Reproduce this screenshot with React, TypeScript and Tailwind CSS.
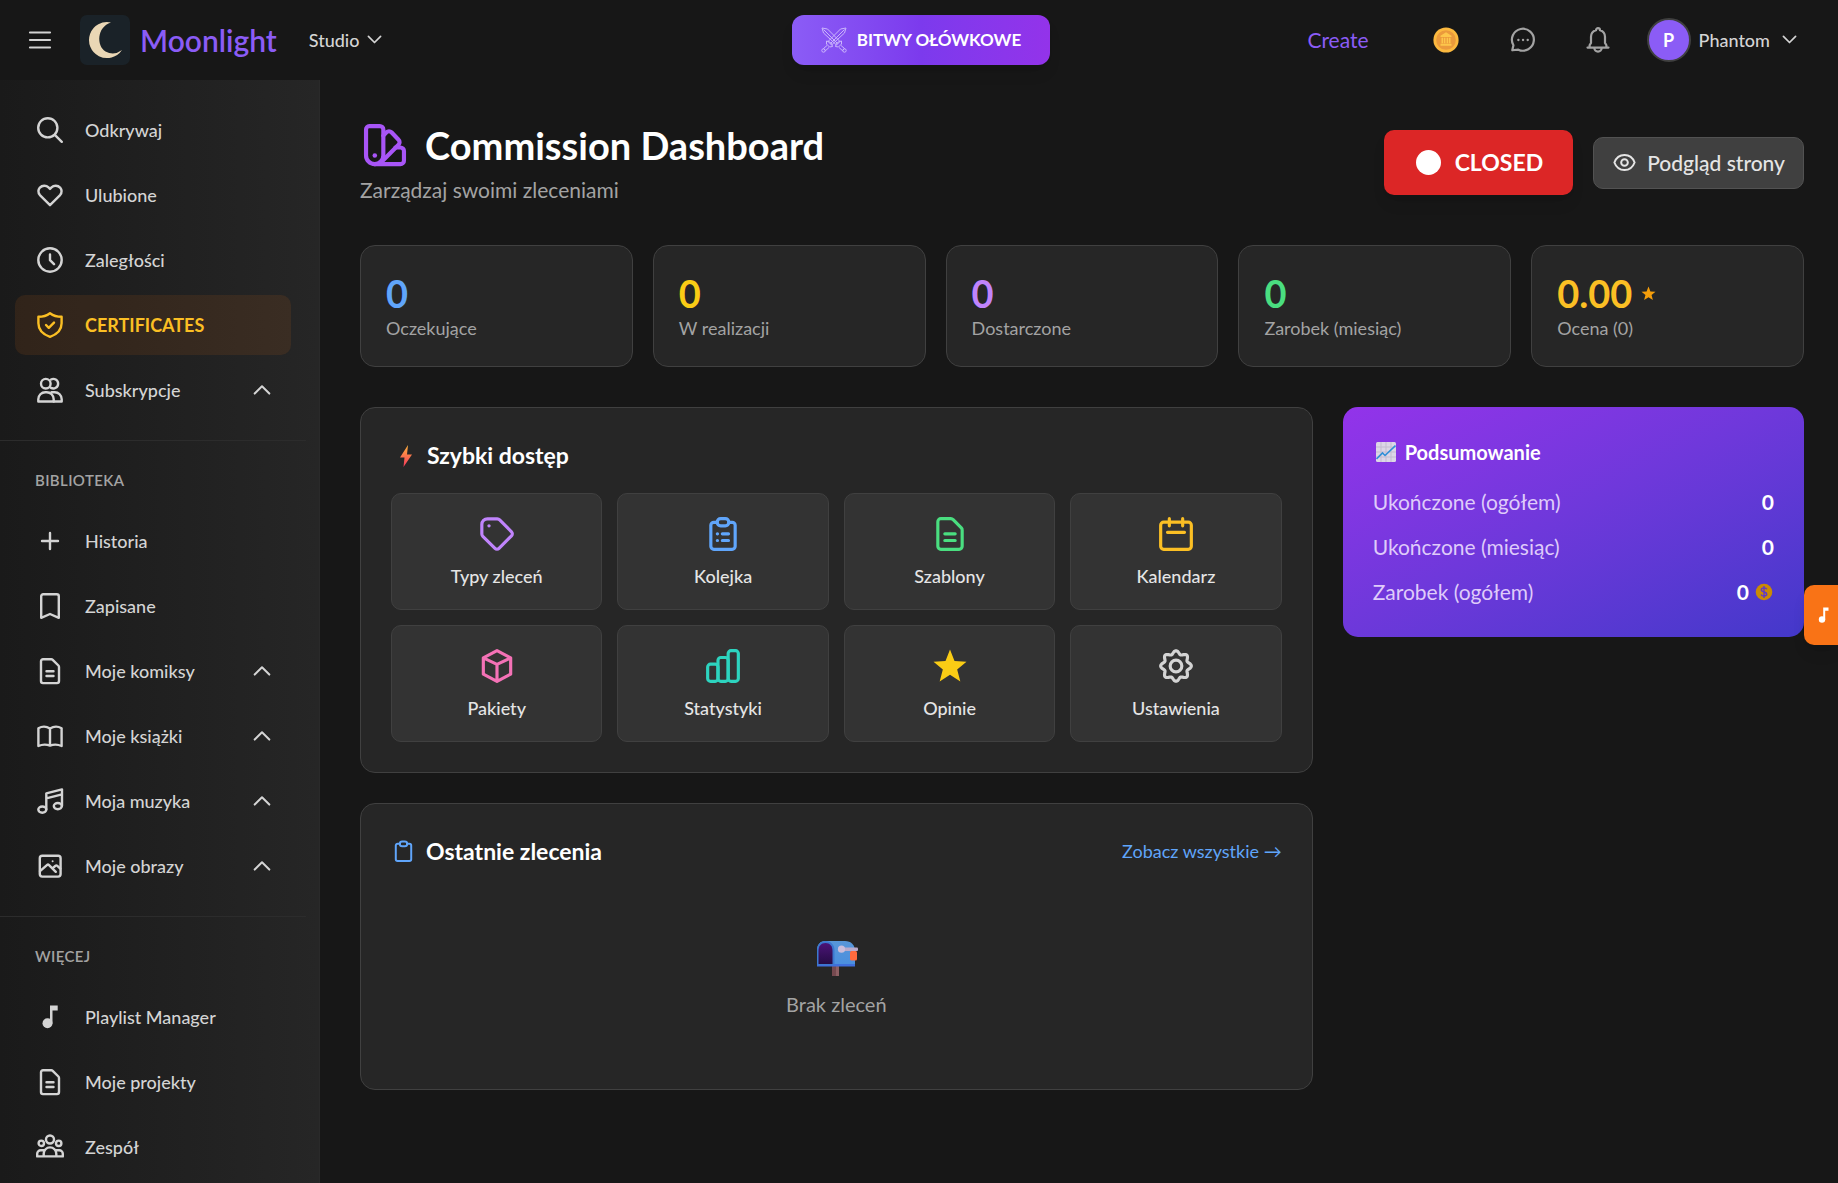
import React from 'react';

type IconProps = { className?: string };

/* Sidebar icons share a 30px grid */
const NavIcon: React.FC<{ children: React.ReactNode }> = ({ children }) => (
  <svg viewBox="0 0 30 30" className="size-[30px] shrink-0" fill="none" stroke="currentColor" strokeWidth="2.4" strokeLinecap="round" strokeLinejoin="round" aria-hidden="true">
    {children}
  </svg>
);

/* Everything else is drawn on a 24px grid */
const Icon: React.FC<IconProps & { children: React.ReactNode; stroke?: number }> = ({ className, children, stroke = 1.9 }) => (
  <svg viewBox="0 0 24 24" className={className} fill="none" stroke="currentColor" strokeWidth={stroke} strokeLinecap="round" strokeLinejoin="round" aria-hidden="true">
    {children}
  </svg>
);

const navIcons = {
  search: <><circle cx="12.8" cy="12.8" r="9.6" /><path d="m19.8 19.8 7 7" /></>,
  heart: <path d="M15 25.2 4.9 15.1a6 6 0 0 1 0-7.5 6 6 0 0 1 8.6-.2L15 8.9l1.5-1.5a6 6 0 0 1 8.6.2 6 6 0 0 1 0 7.5z" />,
  clock: <><circle cx="15" cy="15" r="11.7" /><path d="M15 9.5v5.7l4 4" /></>,
  shield: <><path d="M15 3.2c3.2 2.4 7 3.6 11.6 3.6v6.4c0 6.6-4.2 11-11.6 13.6C7.6 24.2 3.4 19.8 3.4 13.2V6.8C8 6.8 11.8 5.6 15 3.2z" /><path d="m11 15 2.8 2.8L19 12.6" /></>,
  users: <><circle cx="10.8" cy="8.7" r="4.8" /><path d="M16 4.5a4.8 4.8 0 1 1 0 8.4" /><path d="M3.3 26.5v-2.3a7 7 0 0 1 7-7h1.4a7 7 0 0 1 7 7v2.3z" /><path d="M16.5 17.2h3.2a7 7 0 0 1 7 7v2.3h-8" /></>,
  plus: <path d="M15 7v16M7 15h16" />,
  bookmark: <path d="M6.2 26.8V5.2a2 2 0 0 1 2-2h13.6a2 2 0 0 1 2 2v21.6L15 23z" />,
  doc: (
    <>
      <path d="M8 3.2h8.3a2 2 0 0 1 1.4.6l5.7 5.7a2 2 0 0 1 .6 1.4v14.2a2 2 0 0 1-2 2H8a2 2 0 0 1-2-2V5.2a2 2 0 0 1 2-2z" />
      <path d="M11.5 15.2h7M11.5 20h7" />
    </>
  ),
  book: <path d="M15 7.5v17M3.4 25V7.2C7 5.2 11.5 5.3 15 7.5c3.5-2.2 8-2.3 11.6-.3V25c-3.6-1.7-8-1.7-11.6-.5-3.6-1.2-8-1.2-11.6.5z" />,
  music: <><path d="M11.3 23.2V7.3L27 3.4v16.4M11.3 12.3 27 8.3" /><ellipse cx="7.3" cy="23.6" rx="4" ry="3.1" /><ellipse cx="22.8" cy="20.1" rx="4" ry="3.1" /></>,
  image: <><rect x="4.8" y="4.8" width="20.8" height="20.8" rx="2.5" /><path d="m5 20.2 7.2-6.4a1.2 1.2 0 0 1 1.6 0l7 7M17.5 17.5l2.8-2.6a1.5 1.5 0 0 1 2 0l3 2.8" /><circle cx="17.6" cy="10.3" r="1" fill="currentColor" stroke="none" /></>,
  note: <><circle cx="12.5" cy="21.2" r="5" fill="currentColor" stroke="none" /><path d="M15 3.5h7.7v5h-5.2v13H15z" fill="currentColor" stroke="none" /></>,
  team: <><circle cx="15" cy="7.5" r="4" /><circle cx="6.3" cy="11.3" r="2.7" /><circle cx="23.7" cy="11.3" r="2.7" /><path d="M8.7 24.4v-2.7a6.3 6.3 0 0 1 12.6 0v2.7zM8.7 24.4H2.2v-2.6a3.6 3.6 0 0 1 3.6-3.6h3.5M21.3 24.4h6.5v-2.6a3.6 3.6 0 0 0-3.6-3.6h-3.5" /></>,
};

interface NavItem {
  label: string;
  icon: keyof typeof navIcons;
  expandable?: boolean;
  active?: boolean;
}

const sections: { title?: string; items: NavItem[] }[] = [
  {
    items: [
      { label: 'Odkrywaj', icon: 'search' },
      { label: 'Ulubione', icon: 'heart' },
      { label: 'Zaległości', icon: 'clock' },
      { label: 'CERTIFICATES', icon: 'shield', active: true },
      { label: 'Subskrypcje', icon: 'users', expandable: true },
    ],
  },
  {
    title: 'BIBLIOTEKA',
    items: [
      { label: 'Historia', icon: 'plus' },
      { label: 'Zapisane', icon: 'bookmark' },
      { label: 'Moje komiksy', icon: 'doc', expandable: true },
      { label: 'Moje książki', icon: 'book', expandable: true },
      { label: 'Moja muzyka', icon: 'music', expandable: true },
      { label: 'Moje obrazy', icon: 'image', expandable: true },
    ],
  },
  {
    title: 'WIĘCEJ',
    items: [
      { label: 'Playlist Manager', icon: 'note' },
      { label: 'Moje projekty', icon: 'doc' },
      { label: 'Zespół', icon: 'team' },
    ],
  },
];

const stats = [
  { value: '0', label: 'Oczekujące', color: 'text-[#60a5fa]' },
  { value: '0', label: 'W realizacji', color: 'text-[#facc15]' },
  { value: '0', label: 'Dostarczone', color: 'text-[#c084fc]' },
  { value: '0', label: 'Zarobek (miesiąc)', color: 'text-[#4ade80]' },
  { value: '0.00', label: 'Ocena (0)', color: 'text-[#fbbf24]', star: true },
];

const starPath = 'M12 2.1l2.7 6.9 7.2.4-5.6 4.7 1.9 7.2L12 17.3l-6.2 4 1.9-7.2L2.1 9.4l7.2-.4z';

// Eight-lobed gear outline
const gearPath =
  Array.from({ length: 96 }, (_, i) => {
    const a = (i / 96) * Math.PI * 2;
    const r = 8.2 + Math.cos(8 * a);
    return `${i ? 'L' : 'M'}${(12 + r * Math.sin(a)).toFixed(2)} ${(12 - r * Math.cos(a)).toFixed(2)}`;
  }).join('') + 'z';

const quickLinks = [
  {
    label: 'Typy zleceń',
    color: 'text-[#c084fc]',
    icon: <><path d="M2.9 6.3a3.4 3.4 0 0 1 3.4-3.4h5.9a2 2 0 0 1 1.4.6l7.1 7.2a1.7 1.7 0 0 1 0 2.4l-7.5 7.5a1.7 1.7 0 0 1-2.4 0l-7.3-7.2a2 2 0 0 1-.6-1.4z" /><circle cx="7.2" cy="7.1" r="1" fill="currentColor" stroke="none" /></>,
  },
  {
    label: 'Kolejka',
    color: 'text-[#60a5fa]',
    icon: <><path d="M8.5 5H6.5a1.8 1.8 0 0 0-1.8 1.8v12.6a1.8 1.8 0 0 0 1.8 1.8h11a1.8 1.8 0 0 0 1.8-1.8V6.8A1.8 1.8 0 0 0 17.5 5h-2" /><rect x="8.5" y="2.8" width="7" height="4.3" rx="2.1" /><path d="M8.6 11.9h.1M11.6 11.9h3.7M8.6 15.9h.1M11.6 15.9h3.7" /></>,
  },
  {
    label: 'Szablony',
    color: 'text-[#4ade80]',
    icon: <><path d="M6.5 2.8h6a2 2 0 0 1 1.4.6l4.9 4.9a2 2 0 0 1 .5 1.4v9.7a1.8 1.8 0 0 1-1.8 1.8h-11a1.8 1.8 0 0 1-1.8-1.8V4.6a1.8 1.8 0 0 1 1.8-1.8z" /><path d="M8.9 11.9h6.2M8.9 15.9h6.2" /></>,
  },
  {
    label: 'Kalendarz',
    color: 'text-[#fbbf24]',
    icon: <><rect x="2.8" y="4.9" width="18.4" height="16.3" rx="1.8" /><path d="M8 2.8v4.3M16 2.8v4.3M6.9 11h10.2" /></>,
  },
  {
    label: 'Pakiety',
    color: 'text-[#f472b6]',
    icon: <path d="M12 2.8l8.2 4.3v9.8L12 21.2l-8.2-4.3V7.1zM3.8 7.1 12 11l8.2-3.9M12 11v10.2" />,
  },
  {
    label: 'Statystyki',
    color: 'text-[#2dd4bf]',
    icon: <><rect x="2.8" y="10.9" width="6.2" height="10.3" rx="1.7" /><rect x="9" y="6.9" width="6.1" height="14.3" rx="1.7" /><rect x="15.1" y="2.8" width="6.1" height="18.4" rx="1.7" /></>,
  },
  {
    label: 'Opinie',
    color: 'text-[#facc15]',
    icon: <path d={starPath} fill="currentColor" stroke="none" />,
  },
  {
    label: 'Ustawienia',
    color: 'text-[#d4d4d4]',
    icon: <><path d={gearPath} /><circle cx="12" cy="12" r="3.5" /></>,
  },
];

const summary = [
  { label: 'Ukończone (ogółem)', value: '0' },
  { label: 'Ukończone (miesiąc)', value: '0' },
  { label: 'Zarobek (ogółem)', value: '0', coin: true },
];

const Chevron: React.FC<IconProps> = ({ className }) => (
  <svg viewBox="0 0 16 10" className={className} fill="none" stroke="currentColor" strokeWidth="1.8" strokeLinecap="round" strokeLinejoin="round" aria-hidden="true">
    <path d="m1.5 1.5 6.5 6.5 6.5-6.5" />
  </svg>
);

const Swords: React.FC = () => (
  <svg viewBox="0 0 26 26" className="size-[26px]" fill="none" stroke="#cbb5fc" strokeWidth="1" strokeLinejoin="round" aria-hidden="true">
    <path d="M1 1l5.5 1L19 14.5 15.5 18 2.5 6zM2.5 2.5l14 14" />
    <path d="M25 1l-5.5 1L7 14.5l3.5 3.5 13-12zM23.5 2.5l-14 14" />
    <path d="M14.5 19.5c.5-3.5 2.5-5 6-5.5v3l-3 3zM20 18.5l3.5 3-2 2.2-3.5-3.2M11.5 19.5c-.5-3.5-2.5-5-6-5.5v3l3 3zM6 18.5l-3.5 3 2 2.2L8 20.5" />
    <circle cx="23.5" cy="23.5" r="1.7" />
    <circle cx="2.5" cy="23.5" r="1.7" />
  </svg>
);

const BankCoin: React.FC = () => (
  <svg viewBox="0 0 26 26" className="size-[26px]" aria-hidden="true">
    <circle cx="13" cy="13" r="12.6" fill="#fcb93f" />
    <circle cx="13" cy="13" r="9.8" fill="#eb9a3c" />
    <path d="M13 5.2l5.5 3.6v1.2h-11V8.8zM8.5 10.7h1.7v5.6H8.5zM11 10.7h1.4v5.6H11zM13.6 10.7H15v5.6h-1.4zM15.8 10.7h1.7v5.6h-1.7zM7.5 16.8h11v2h-11z" fill="#fdc64b" />
  </svg>
);

const Mailbox: React.FC = () => (
  <svg viewBox="-3 0 44 36" className="h-9 w-11" aria-hidden="true">
    <defs>
      <linearGradient id="mail-body" x1="0" y1="0" x2="0" y2="1">
        <stop offset="0" stopColor="#5796d8" />
        <stop offset="1" stopColor="#4a8fdf" />
      </linearGradient>
      <linearGradient id="mail-door" x1="0" y1="0" x2="0" y2="1">
        <stop offset="0" stopColor="#4b1477" />
        <stop offset="1" stopColor="#260c45" />
      </linearGradient>
    </defs>
    <path d="M15 24h7v12h-7z" fill="#75494f" />
    <path d="M19 24h3v12h-3z" fill="#8d5f63" />
    <path d="M8 1h20c6 0 10 4 10 10v15H0V10c0-5 3-9 8-9z" fill="url(#mail-body)" />
    <path d="M0 24h38v2.5H0z" fill="#3f6fdc" />
    <path d="M0 10c0-5 3-9 8.5-9s9 4 9 9v15H0z" fill="#3c78cf" />
    <path d="M1.5 11c0-5 2.5-8 7-8s7 3 7 8v13h-14z" fill="url(#mail-door)" />
    <rect x="23" y="7.5" width="18" height="3.5" rx="1" fill="#b9aacb" />
    <circle cx="24.5" cy="9.2" r="3.6" fill="#c9bddb" />
    <rect x="33" y="11" width="7" height="9.5" rx="1.5" fill="#ff6a3d" />
  </svg>
);

const ChartEmoji: React.FC = () => (
  <svg viewBox="0 0 20 20" className="size-5" aria-hidden="true">
    <rect width="20" height="20" rx="1.5" fill="#dcd6e6" />
    <path d="M5 0v20M10 0v20M15 0v20M0 5h20M0 10h20M0 15h20" stroke="#c3bcd0" strokeWidth="1" />
    <path d="m.5 17 6-6 2.5 2.5L19.5 3.5" fill="none" stroke="#2f8fd8" strokeWidth="1.6" />
  </svg>
);

const Header: React.FC = () => (
  <header className="grid h-20 shrink-0 grid-cols-[1fr_auto_1fr] items-center pr-6 pl-7">
    <div className="flex items-center">
      <button type="button" aria-label="Menu" className="mr-7">
        <Icon className="size-6" stroke={2.2}><path d="M2 4.5h20M2 12h20M2 19.5h20" /></Icon>
      </button>
      <a href="#" className="flex items-center gap-[10px] text-[30px] leading-[38px] font-semibold text-[#8b5cf6]">
        <svg viewBox="0 0 50 50" className="size-[50px]" aria-hidden="true">
          <rect width="50" height="50" rx="7" fill="#1a2228" />
          <path d="M31 7.5a18 18 0 1 0 11 27.5a15.5 15.5 0 0 1-16.5 1.5C16.5 31 16.5 12 31 7.5z" fill="#ead7b5" />
        </svg>
        Moonlight
      </a>
      <button type="button" className="ml-8 flex items-center gap-2 text-[18px] font-medium text-[#d4d4d4]">
        Studio
        <Chevron className="w-[15px]" />
      </button>
    </div>
    <button type="button" className="flex h-[50px] items-center gap-[10px] rounded-xl bg-linear-to-r from-[#8b5cf6] via-[#7c3aed] to-[#9333ea] px-[29px] text-[17px] font-bold text-white shadow-lg">
      <Swords />
      BITWY OŁÓWKOWE
    </button>
    <div className="flex items-center justify-end pr-[17px] text-[#a3a3a3]">
      <a href="#" className="mr-16 text-[21px] text-[#8b5cf6]">Create</a>
      <button type="button" aria-label="Coins" className="mr-[50px]"><BankCoin /></button>
      <button type="button" aria-label="Messages" className="mr-[47px]">
        <Icon className="size-7">
          <path d="M2.8 20.8l1-4.3A9.4 9.4 0 1 1 8 20.3z" />
          <path d="M8 12h.1M12 12h.1M16 12h.1" strokeWidth="2" />
        </Icon>
      </button>
      <button type="button" aria-label="Notifications" className="mr-[35px]">
        <Icon className="size-7">
          <path d="M3 18.5h18M4.8 18.5v-2l1.2-2V9.3a6 6 0 0 1 4.3-5.7 1.7 1.7 0 0 1 3.4 0A6 6 0 0 1 18 9.3v5.2l1.2 2v2M8.8 18.7a3.2 3.2 0 0 0 6.4 0" />
        </Icon>
      </button>
      <button type="button" className="flex items-center gap-2 text-[18px] font-medium text-[#d4d4d4]">
        <span className="flex size-11 items-center justify-center rounded-full border-2 border-[#404040] bg-[#8b5cf6] font-bold text-white">P</span>
        Phantom
        <Chevron className="ml-1 w-[15px]" />
      </button>
    </div>
  </header>
);

const Sidebar: React.FC = () => (
  <aside className="w-80 shrink-0 border-r border-[#2a2a2a] bg-linear-to-r from-[#1a1a1a] to-[#262626]">
    <nav className="mr-[13px]">
      {sections.map((section, i) => (
        <div key={i} className={i === 0 ? 'py-5' : 'border-t border-[#2c2c2c] py-5'}>
          {section.title && (
            <h2 className="mb-[10px] px-[35px] pt-1 pb-[6px] text-[15px] leading-[30px] font-semibold tracking-wide text-[#a3a3a3]">{section.title}</h2>
          )}
          <ul className="flex flex-col gap-[5px] px-[15px]">
            {section.items.map((item) => (
              <li key={item.label}>
                <a
                  href="#"
                  className={
                    item.active
                      ? 'flex h-[60px] items-center gap-5 rounded-[10px] bg-[#f97316]/10 px-5 text-[18px] font-bold text-[#fbbf24]'
                      : 'flex h-[60px] items-center gap-5 rounded-[10px] px-5 text-[18px] font-medium text-[#d4d4d4]'
                  }
                >
                  <NavIcon>{navIcons[item.icon]}</NavIcon>
                  <span className="grow">{item.label}</span>
                  {item.expandable && <Chevron className="w-[18px] rotate-180" />}
                </a>
              </li>
            ))}
          </ul>
        </div>
      ))}
    </nav>
  </aside>
);

const App: React.FC = () => (
  <div className="flex h-screen flex-col overflow-hidden bg-[#171717] font-['Lato',sans-serif] text-[#d4d4d4]">
    <Header />
    <div className="flex min-h-0 grow">
      <Sidebar />
      <main className="grow pt-10 pr-[34px] pl-10">
        {/* Page title and actions */}
        <div className="mb-10 flex items-center justify-between">
          <div>
            <h1 className="flex items-center gap-[15px] text-[38px] leading-[50px] font-bold text-white">
              <Icon className="size-[50px] text-[#a855f7]" stroke={2}>
                <path d="M4.5 2.9h5a1.7 1.7 0 0 1 1.7 1.7v12.4a4.1 4.1 0 0 1-8.3 0V4.6a1.7 1.7 0 0 1 1.6-1.7z" />
                <path d="m11.2 7.5 1.5-1.6a1.7 1.7 0 0 1 2.4 0l3.4 3.6a1.7 1.7 0 0 1 0 2.4l-8.2 8.3" />
                <path d="M17 13.2h2.4a1.7 1.7 0 0 1 1.7 1.7v4.6a1.7 1.7 0 0 1-1.7 1.7H7" />
                <circle cx="7.1" cy="17" r="1.1" fill="currentColor" stroke="none" />
              </Icon>
              Commission Dashboard
            </h1>
            <p className="mt-[5px] text-[21px] leading-[30px] text-[#a3a3a3]">Zarządzaj swoimi zleceniami</p>
          </div>
          <div className="flex items-center gap-5">
            <button type="button" className="flex h-[65px] items-center gap-3 rounded-[10px] bg-[#dc2626] px-[30px] text-[23px] font-bold text-white shadow-lg">
              <span className="mx-[2px] size-[25px] rounded-full bg-white" />
              CLOSED
            </button>
            <a href="#" className="flex h-[52px] items-center gap-[10px] rounded-[10px] border border-[#525252] bg-[#404040] px-[18px] text-[21px] font-medium text-[#e5e5e5]">
              <Icon className="size-[25px]">
                <path d="M2.3 12c1.7-4.6 5.3-7.2 9.7-7.2s8 2.6 9.7 7.2c-1.7 4.6-5.3 7.2-9.7 7.2S4 16.6 2.3 12z" />
                <circle cx="12" cy="12" r="3.2" />
              </Icon>
              Podgląd strony
            </a>
          </div>
        </div>

        {/* Stats */}
        <div className="mb-10 grid grid-cols-5 gap-5">
          {stats.map((s) => (
            <div key={s.label} className="rounded-[15px] border border-[#404040] bg-[#262626] p-[25px]">
              <div className={`flex items-center gap-2 text-[38px] leading-[45px] font-bold ${s.color}`}>
                {s.value}
                {s.star && (
                  <svg viewBox="0 0 24 24" className="size-[17px] text-[#f59e0b]" fill="currentColor" aria-hidden="true"><path d={starPath} /></svg>
                )}
              </div>
              <div className="text-[18px] leading-[25px] text-[#a3a3a3]">{s.label}</div>
            </div>
          ))}
        </div>

        <div className="grid grid-cols-3 items-start gap-[30px]">
          <div className="col-span-2 flex flex-col gap-[30px]">
            <section className="rounded-[15px] border border-[#404040] bg-[#262626] p-[30px]">
              <h2 className="mb-5 flex items-center gap-[6px] text-[23px] leading-[35px] font-bold text-white">
                <svg viewBox="0 0 30 30" className="size-[30px]" aria-hidden="true">
                  <defs>
                    <linearGradient id="bolt" x1="0" y1="0" x2="0" y2="1">
                      <stop offset="0" stopColor="#ffb43c" />
                      <stop offset="1" stopColor="#f5365c" />
                    </linearGradient>
                  </defs>
                  <path d="M17 4 9 16.5h4.5L12.5 26 21 13.5h-5z" fill="url(#bolt)" />
                </svg>
                Szybki dostęp
              </h2>
              <div className="grid grid-cols-4 gap-[15px]">
                {quickLinks.map((q) => (
                  <a key={q.label} href="#" className="flex flex-col items-center gap-[10px] rounded-[10px] border border-[#404040] bg-[#333333] p-5 text-[18px] leading-[25px] font-medium text-[#e5e5e5]">
                    <span className={q.color}><Icon className="size-10">{q.icon}</Icon></span>
                    {q.label}
                  </a>
                ))}
              </div>
            </section>

            <section className="rounded-[15px] border border-[#404040] bg-[#262626] p-[30px]">
              <div className="mb-5 flex items-center justify-between">
                <h2 className="flex items-center gap-[10px] text-[23px] leading-[35px] font-bold text-white">
                  <Icon className="size-[25px] text-[#60a5fa]">
                    <path d="M8.5 4.5H6.3a1.7 1.7 0 0 0-1.7 1.7v13.3a1.7 1.7 0 0 0 1.7 1.7h11.4a1.7 1.7 0 0 0 1.7-1.7V6.2a1.7 1.7 0 0 0-1.7-1.7h-2.2" />
                    <rect x="8.5" y="2.5" width="7" height="4.5" rx="2.2" />
                  </Icon>
                  Ostatnie zlecenia
                </h2>
                <a href="#" className="text-[18px] leading-[25px] text-[#60a5fa]">Zobacz wszystkie →</a>
              </div>
              <div className="flex flex-col items-center gap-[10px] py-10">
                <div className="flex h-[50px] items-center pt-2"><Mailbox /></div>
                <p className="text-[20px] leading-[30px] text-[#a3a3a3]">Brak zleceń</p>
              </div>
            </section>
          </div>

          <section className="rounded-[15px] bg-linear-to-br from-[#9333ea] to-[#4338ca] p-[30px]">
            <h2 className="mb-5 flex items-center gap-[9px] pl-[3px] text-[20px] leading-[30px] font-bold text-white">
              <ChartEmoji />
              Podsumowanie
            </h2>
            <dl className="flex flex-col gap-[15px] text-[21px] leading-[30px]">
              {summary.map((row) => (
                <div key={row.label} className="flex items-center justify-between">
                  <dt className="text-[#dfcbfa]">{row.label}</dt>
                  <dd className="flex items-center gap-[5px] font-bold text-white">
                    {row.value}
                    {row.coin && (
                      <svg viewBox="0 0 20 20" className="size-5" aria-hidden="true">
                        <circle cx="10" cy="10" r="8.3" fill="#ca8a04" />
                        <path d="M12.8 7.3c-.4-1-1.4-1.5-2.8-1.5-1.6 0-2.7.8-2.7 2 0 2.9 5.5 1.5 5.5 4.3 0 1.2-1.1 2.1-2.8 2.1-1.5 0-2.5-.6-2.9-1.7M10 4v12" fill="none" stroke="#5b35d0" strokeWidth="1.3" />
                      </svg>
                    )}
                  </dd>
                </div>
              ))}
            </dl>
          </section>
        </div>
      </main>
    </div>

    {/* Music player tab pinned to the window edge */}
    <button type="button" aria-label="Player" className="absolute top-[585px] right-0 flex h-[60px] w-[34px] items-center justify-center rounded-l-[10px] bg-[#f97316] pl-[6px] text-white shadow-lg">
      <svg viewBox="0 0 12 18" className="h-[18px] w-3" fill="currentColor" aria-hidden="true">
        <circle cx="4" cy="13.5" r="3.2" />
        <path d="M5.2 1.5h5.3v3.3H7.2v9h-2z" />
      </svg>
    </button>
  </div>
);

export default App;
